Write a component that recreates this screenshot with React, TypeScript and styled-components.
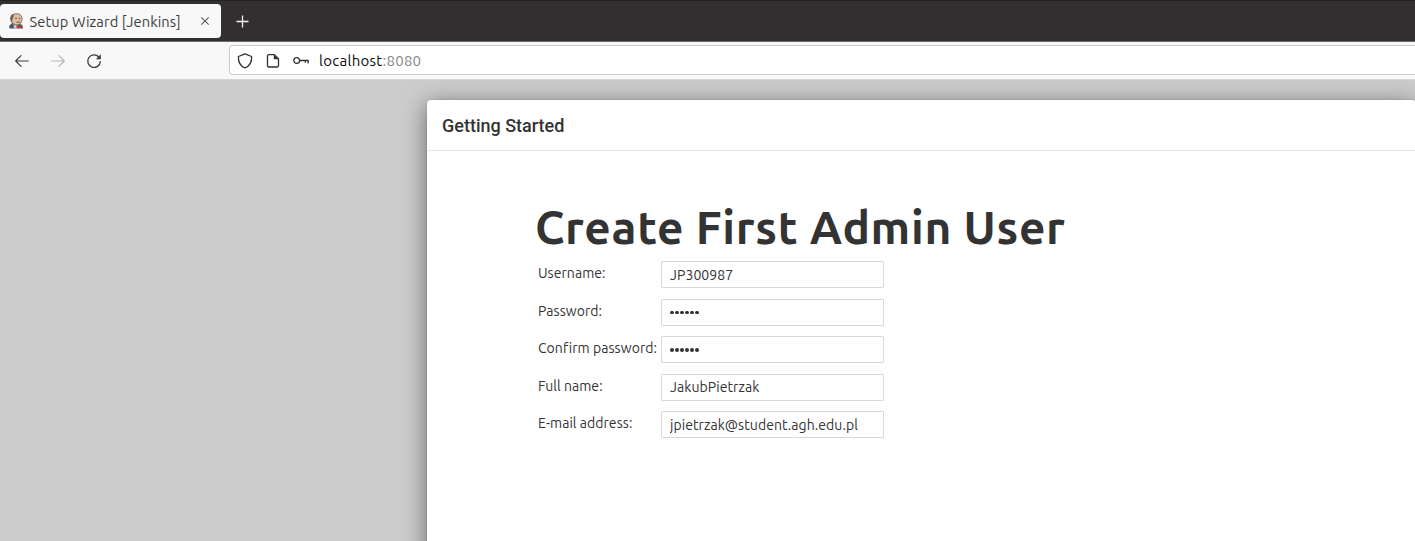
import React from "react";
import styled, { createGlobalStyle } from "styled-components";

const GlobalStyle = createGlobalStyle`
  * { box-sizing: border-box; }
  body { margin: 0; overflow: hidden; }
`;

const uiFont = `Ubuntu, "Noto Sans", "Open Sans", sans-serif`;

const Browser = styled.div`
  display: flex;
  flex-direction: column;
  width: 100%;
  height: 541px;
  overflow: hidden;
  font-family: ${uiFont};
  color: #333;
`;

const TabStrip = styled.header`
  display: flex;
  align-items: flex-start;
  flex: none;
  height: 42px;
  padding-top: 3px;
  background: #322f30;
  border-top: 1px solid #242223;
  border-bottom: 1px solid #6b696a;
`;

const Tab = styled.div`
  display: flex;
  align-items: center;
  width: 221px;
  height: 34px;
  padding: 0 9px 0 9px;
  border-radius: 4px;
  background: #f8f8f8;
`;

const TabTitle = styled.span`
  flex: 1;
  margin-left: 5.5px;
  font-size: 14.67px;
  letter-spacing: 0.1px;
  white-space: nowrap;
  color: #3d3d3d;
`;

const NewTab = styled.div`
  display: flex;
  align-items: center;
  height: 34px;
  margin-left: 14px;
`;

const Toolbar = styled.nav`
  display: flex;
  align-items: center;
  flex: none;
  height: 38px;
  padding-left: 14px;
  background: #f8f8f8;
  border-bottom: 1px solid #d4d4d4;
`;

const NavButtons = styled.div`
  display: flex;
  align-items: center;
  gap: 20px;
  width: 215px;
`;

const AddressBar = styled.div`
  display: flex;
  align-items: center;
  flex: 1;
  height: 30px;
  margin-bottom: 1px;
  padding: 1px 0 0 7px;
  background: #fff;
  border: 1px solid #cbcbcb;
  border-right: 0;
  border-radius: 4px 0 0 4px;
`;

const Identity = styled.div`
  display: flex;
  align-items: center;
  gap: 12px;
  width: 82px;
`;

const Address = styled.span`
  font-size: 15px;
  letter-spacing: 0.27px;
  color: #0c0c0d;
  white-space: nowrap;
`;

const Port = styled.span`
  color: #858585;
`;

const Page = styled.main`
  flex: 1;
  min-height: 0;
  padding: 20px 0 0 427px;
  overflow: hidden;
  background: #ccc;
`;

const Dialog = styled.section`
  width: 989px;
  height: 600px;
  background: #fff;
  border-radius: 4px;
  box-shadow: 0 5px 25px rgba(0, 0, 0, 0.5), 0 0 2px rgba(0, 0, 0, 0.2);
`;

const DialogHeader = styled.div`
  display: flex;
  align-items: center;
  height: 51px;
  padding: 1px 15px 0;
  border-bottom: 1px solid #e8e8e8;
`;

const DialogTitle = styled.h4`
  margin: 0;
  font: 500 18px/26px Roboto, sans-serif;
  color: #333;
`;

const DialogBody = styled.div`
  padding: 48px 0 0 111px;
`;

const Heading = styled.h1`
  margin: 0 0 6px -3px;
  font-size: 46px;
  line-height: 56px;
  font-weight: 600;
  letter-spacing: 0.68px;
  white-space: nowrap;
  color: #333;
`;

const Form = styled.form`
  display: grid;
  gap: 10px;
`;

const Row = styled.div`
  display: grid;
  grid-template-columns: 123px 223px;
  height: 27.5px;
`;

const Label = styled.label`
  font-size: 14px;
  line-height: 24px;
  letter-spacing: 0.05px;
  white-space: nowrap;
  color: #333;
`;

const Input = styled.input`
  width: 223px;
  height: 27px;
  padding: 0 8px;
  border: 1px solid #d9d9d9;
  border-radius: 1px;
  outline: 0;
  background: #fff;
  font: 14px ${uiFont};
  letter-spacing: 0.08px;
  color: #333;
`;

const Dots = styled.div`
  display: flex;
  align-items: center;
  gap: 1.2px;
  width: 223px;
  height: 27px;
  padding: 1px 8px 0;
  border: 1px solid #d9d9d9;
  border-radius: 1px;

  i {
    width: 3.9px;
    height: 3.9px;
    border-radius: 50%;
    background: #333;
  }
`;

const ButlerIcon = () => (
  <svg width="15" height="16" viewBox="0 0 15 16">
    <path d="M.3 15.500V12.600l3-2.500 7 .5 2.900 1.500.7 3.400z" fill="#4c5964" />
    <path d="M4.600 10.500 9 11.300l.4 4.200H5z" fill="#c9c9cb" />
    <path d="M2.300 7.500C1.200 3.200 4 .8 7.400.7c3.900-.1 5.900 2.300 5.600 5.600-.2 3.500-2 5.700-4.900 5.700-2.700 0-5-1.700-5.800-4.500z" fill="#e3bd9f" stroke="#655850" strokeWidth=".8" />
    <path d="M2.300 9.500C.4 5.200 1.300 1.600 5 .8c-.8 1.500-.2 3-1.200 4.500z" fill="#625b57" />
    <path d="M6.200 5.300h1.600M9.700 5.300h1.500M7.500 9c1.400.5 2.400.3 3.500-.2" fill="none" stroke="#554238" strokeWidth="1" />
    <path d="m7.500 11.800 2.500 1.200 3.300-1.300.2 3.700-3.200-1L7.500 15.200z" fill="#a8433f" />
  </svg>
);

const fields = [
  { id: "username", label: "Username:", value: "JP300987" },
  { id: "password", label: "Password:", dots: 6 },
  { id: "confirm", label: "Confirm password:", dots: 6 },
  { id: "fullname", label: "Full name:", value: "JakubPietrzak" },
  { id: "email", label: "E-mail address:", value: "jpietrzak@student.agh.edu.pl" },
];

export default function App() {
  return (
    <Browser>
      <GlobalStyle />
      <TabStrip>
        <Tab>
          <ButlerIcon />
          <TabTitle>Setup Wizard [Jenkins]</TabTitle>
          <svg width="14" height="14" viewBox="0 0 14 14" fill="none" stroke="#5a5a5a" strokeWidth="1.100">
            <path d="m3.300 3.300 7.400 7.400m0-7.400-7.400 7.400" />
          </svg>
        </Tab>
        <NewTab>
          <svg width="15" height="15" viewBox="0 0 15 15" fill="none" stroke="#f1f1f1" strokeWidth="1.300">
            <path d="M7.500 1.500v12M1.500 7.500h12" />
          </svg>
        </NewTab>
      </TabStrip>
      <Toolbar>
        <NavButtons>
          <svg width="16" height="16" viewBox="0 0 16 16" fill="none" stroke="#3c3c3c" strokeWidth="1.200" strokeLinecap="round" strokeLinejoin="round">
            <path d="M14.300 8H1.800M7 2.700 1.700 8 7 13.300" />
          </svg>
          <svg width="16" height="16" viewBox="0 0 16 16" fill="none" stroke="#b5b5b5" strokeWidth="1.200" strokeLinecap="round" strokeLinejoin="round">
            <path d="M1.700 8h12.500M9 2.700 14.300 8 9 13.300" />
          </svg>
          <svg width="16" height="16" viewBox="0 0 16 16" fill="none" stroke="#3c3c3c" strokeWidth="1.300" strokeLinecap="round">
            <path d="M14.300 8.600A6.300 6.300 0 1 1 12.600 3.800" />
            <path d="M14.800 1.300v5H9.800z" fill="#3c3c3c" stroke="none" />
          </svg>
        </NavButtons>
        <AddressBar>
          <Identity>
            <svg width="16" height="16" viewBox="0 0 16 16" fill="none" stroke="#303030" strokeWidth="1.300" strokeLinejoin="round">
              <path d="M8 .9 14.600 3.500C14.900 9 12.500 13.100 8 14.900 3.500 13.100 1.100 9 1.400 3.500z" />
            </svg>
            <svg width="16" height="16" viewBox="0 0 16 16" fill="none" stroke="#303030" strokeWidth="1.300" strokeLinejoin="round">
              <path d="M2.500 3q0-1.400 1.400-1.400H9.300L13.500 5.800v6.800q0 1.400-1.400 1.400H3.900q-1.400 0-1.400-1.400z" />
              <path d="M8.800 1.600v4.700h4.700z" fill="#303030" stroke="none" />
            </svg>
            <svg width="18" height="16" viewBox="0 0 18 16" fill="none" stroke="#303030" strokeWidth="1.300">
              <circle cx="3.700" cy="7.500" r="2.900" />
              <path d="M6.600 7.500h8.600v3M12.300 7.500v2.300" />
            </svg>
          </Identity>
          <Address>
            localhost<Port>:8080</Port>
          </Address>
        </AddressBar>
      </Toolbar>
      <Page>
        <Dialog>
          <DialogHeader>
            <DialogTitle>Getting Started</DialogTitle>
          </DialogHeader>
          <DialogBody>
            <Heading>Create First Admin User</Heading>
            <Form>
              {fields.map((f) => (
                <Row key={f.id}>
                  <Label htmlFor={f.id}>{f.label}</Label>
                  {f.dots ? (
                    <Dots id={f.id}>
                      {Array.from({ length: f.dots }, (_, i) => <i key={i} />)}
                    </Dots>
                  ) : (
                    <Input id={f.id} defaultValue={f.value} />
                  )}
                </Row>
              ))}
            </Form>
          </DialogBody>
        </Dialog>
      </Page>
    </Browser>
  );
}
